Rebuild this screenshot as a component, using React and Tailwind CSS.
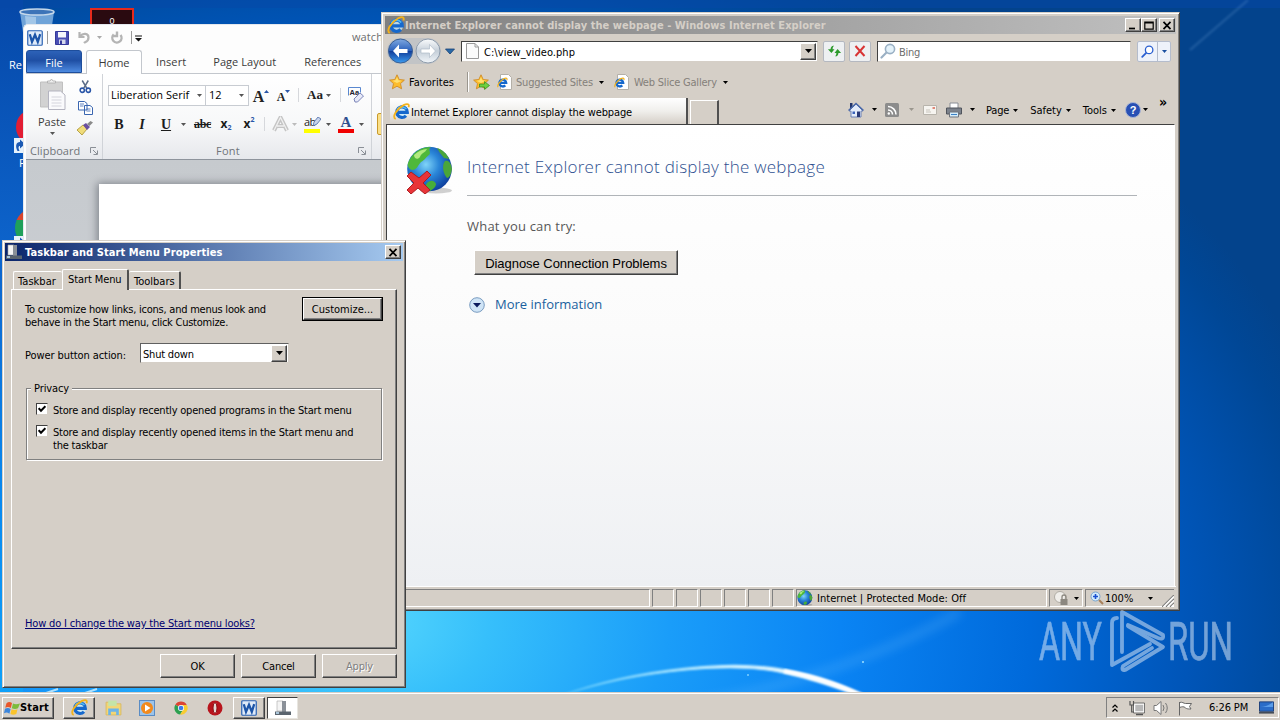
const ui = "font-['DejaVu_Sans_Condensed','DejaVu_Sans',sans-serif] text-[11px] leading-[13px] text-black";
const segoe = "font-['Open_Sans','Noto_Sans',sans-serif]";
const raised =
  'bg-[#d5cfc7] border border-t-white border-l-white border-r-[#404040] border-b-[#404040] shadow-[inset_-1px_-1px_0_#808080]';
const sunken = 'border border-t-[#808080] border-l-[#808080] border-r-white border-b-white';
const windowFrame =
  'border border-[#d5cfc7] border-r-[#404040] border-b-[#404040] shadow-[inset_1px_1px_0_#ffffff,inset_-1px_-1px_0_#808080] bg-[#d5cfc7]';

function Arrow({ className = '', color = '#000' }) {
  return (
    <svg viewBox="0 0 7 4" className={`w-[5px] h-[3px] shrink-0 ${className}`}>
      <path d="M0 0h7L3.5 4z" fill={color} />
    </svg>
  );
}

function IeLogo({ className = 'size-4' }) {
  return (
    <svg viewBox="0 0 16 16" className={`shrink-0 ${className}`} fill="none">
      <circle cx="8.400" cy="8.500" r="6" fill="#c8ecfc" opacity=".8" />
      <path d="M3.800 8.800h9.700A5 5 0 1 0 12.200 12" stroke="#1668cc" strokeWidth="3" />
      <path d="M4 6.400A5 5 0 0 1 12.600 5.800" stroke="#4fb8f4" strokeWidth="1.500" />
      <path d="M2.600 15C-1.500 13.600 3.600 5.400 10 2c3.800-1.900 5.600-.9 4.600 2" stroke="#f2b21c" strokeWidth="1.700" />
    </svg>
  );
}

function IePage() {
  return (
    <svg viewBox="0 0 16 16" className="size-4 shrink-0" fill="none">
      <path d="M3.500.5h8l3 3v12h-11z" fill="#fff" stroke="#b4b0a8" />
      <path d="M2.600 8.800h6.600a3.400 3.400 0 1 0-.9 2.600" stroke="#1668cc" strokeWidth="2.300" />
      <path d="M1.200 13C-.4 12 3 6.500 7 4.600c2.400-1 3.300-.3 2.900 1.400" stroke="#f2b21c" strokeWidth="1.200" />
    </svg>
  );
}

function Star({ add }) {
  return (
    <svg viewBox="0 0 17 16" className="w-[17px] h-4 shrink-0">
      <path
        d="M8 .8l2.200 4.700 5.200.6-3.900 3.500 1.100 5.200L8 12.200l-4.600 2.600 1.100-5.200L.6 6.100l5.200-.6z"
        fill="#fcbc2c"
        stroke="#d08c28"
        strokeWidth=".9"
      />
      <path d="M8 3l1.400 3.200 3.400.5L8 9 3.500 6.700l3-.5z" fill="#ffe070" />
      {add && <path d="M6.500 10h5V7.600l5 3.900-5 3.900V13h-5z" fill="#6fd040" stroke="#2d8a1c" strokeWidth=".7" />}
    </svg>
  );
}

function Globe({ className, error }) {
  return (
    <svg viewBox="0 0 48 48" className={`shrink-0 ${className}`}>
      <defs>
        <radialGradient id="sea" cx=".42" cy=".4" r=".65">
          <stop offset="0" stopColor="#7fd4f8" />
          <stop offset=".45" stopColor="#2a86d8" />
          <stop offset="1" stopColor="#0c3a9a" />
        </radialGradient>
      </defs>
      <ellipse cx="30" cy="44.500" rx="16" ry="3" fill="#000" opacity=".18" />
      <circle cx="23.500" cy="23" r="22.300" fill="url(#sea)" />
      <path d="M2 17C6 7 14 1 25 1c-4 3 1 5-2 8-3 2-4 5-8 7-3 3-4 8-9 8-3-1-5-4-4-7z" fill="#4fb83a" />
      <path d="M8 9c4-4 9-6 13-6-2 4-6 4-7 8-2 3-6 2-6-2z" fill="#b2ea80" />
      <path d="M31 2c6 2 10 6 12 11l-5-1-4-5zM39 15c3-1 6 1 7 8-1 6-3 9-5 9-3-3-6-12-2-17z" fill="#4aa63a" />
      <path d="M21 37c4-4 8-2 9 1 0 3-3 5-6 7-4-1-6-4-3-8z" fill="#48ae3a" />
      {error && (
        <path
          d="M1 30l4-4 8 6 8-7 4 4-8 8 7 7-5 4-7-6-7 6-4-4 7-7z"
          fill="#e83438"
          stroke="#b01c20"
          strokeWidth="1"
        />
      )}
    </svg>
  );
}

function WordLogo({ className = 'size-4' }) {
  return (
    <svg viewBox="0 0 16 16" className={`shrink-0 ${className}`} fill="none">
      <rect x=".75" y=".75" width="14.500" height="14.500" rx="1" fill="#dfeaf8" stroke="#2a62b4" strokeWidth="1.200" />
      <path d="M2.800 4.200l2.200 7.600 3-7 2.800 7 2.400-7.600" stroke="#1d55a8" strokeWidth="2.300" />
    </svg>
  );
}

function Lens({ className, color, rim = '#fff' }) {
  return (
    <svg viewBox="0 0 16 16" className={`size-4 shrink-0 ${className || ''}`} fill="none">
      <path d="M1.500 14.500L7 9" stroke={color} strokeWidth="2.200" strokeLinecap="round" />
      <circle cx="10" cy="6" r="4.600" fill={rim} stroke={color} strokeWidth="1.600" />
    </svg>
  );
}

function Wallpaper() {
  return (
    <svg className="absolute inset-0 w-[1280px] h-[720px]" viewBox="0 0 1280 720">
      <defs>
        <radialGradient id="sky" gradientUnits="userSpaceOnUse" cx="0" cy="0" r="1" gradientTransform="translate(370 620) scale(1000 720)">
          <stop offset="0" stopColor="#55d6fd" />
          <stop offset=".12" stopColor="#36bffb" />
          <stop offset=".3" stopColor="#1a9df9" />
          <stop offset=".47" stopColor="#0a84f4" />
          <stop offset=".66" stopColor="#006adb" />
          <stop offset=".82" stopColor="#0055b8" />
          <stop offset=".95" stopColor="#004796" />
          <stop offset="1" stopColor="#03438c" />
        </radialGradient>
        <linearGradient id="arc" x1="0" x2="1" y1="0" y2="0">
          <stop offset="0" stopColor="#7fdcff" stopOpacity=".5" />
          <stop offset=".5" stopColor="#c8f0ff" />
          <stop offset="1" stopColor="#fff" />
        </linearGradient>
        <linearGradient id="leftEdge" x1="0" x2="0" y1="0" y2="1">
          <stop offset="0" stopColor="#0648a8" />
          <stop offset=".35" stopColor="#0d64cc" />
          <stop offset=".7" stopColor="#0a8af0" />
          <stop offset="1" stopColor="#10a4fa" />
        </linearGradient>
        <filter id="soft"><feGaussianBlur stdDeviation="5" /></filter>
        <filter id="glow"><feGaussianBlur stdDeviation=".8" /></filter>
      </defs>
      <rect width="1280" height="720" fill="url(#sky)" />
      <rect width="23" height="720" fill="url(#leftEdge)" />
      <rect width="1280" height="8" fill="#0648a8" opacity=".5" />
      <path d="M680 706Q840 680 960 612" stroke="#7cc8ff" strokeWidth="9" opacity=".2" fill="none" filter="url(#soft)" />
      <path d="M1190 50L1248 0" stroke="#8ab8e8" strokeWidth="2.500" opacity=".18" filter="url(#glow)" />
      <path d="M560 696C640 667 740 659 790 671C825 678 852 690 874 700C845 692 820 681 788 674C740 661 640 669 560 696z" fill="url(#arc)" stroke="url(#arc)" strokeWidth="1.200" filter="url(#glow)" />
      <path d="M784 671C820 677 845 687 872 700" stroke="#fff" strokeWidth="4" fill="none" filter="url(#glow)" />
      <path d="M40 695l18-6M85 693l12-4" stroke="#d6f4ff" strokeWidth="2" opacity=".8" />
      <circle cx="863" cy="662" r="1" fill="#9fe0ff" />
      <circle cx="748" cy="675" r="1" fill="#7fd0ff" />
    </svg>
  );
}

function Shortcut() {
  return (
    <svg viewBox="0 0 14 15" className="w-[14px] h-[15px]">
      <rect width="14" height="15" fill="#e6f2fc" />
      <path d="M3.500 13C1 8 2 4 6 4V1.500L11 6 6 10.500V8C4.500 8 4 9.500 5.500 13z" fill="#1c5ab4" />
    </svg>
  );
}

function DesktopIcons() {
  return (
    <div>
      <svg viewBox="0 0 36 40" className="absolute left-[19px] top-[8px] w-9 h-10">
        <path d="M1 4l5 34h24l5-34z" fill="#6fa3d8" />
        <path d="M6 8l3 30h8V9z" fill="#b8d4ee" opacity=".7" />
        <ellipse cx="18" cy="4" rx="17" ry="3" fill="#3d74b8" stroke="#c5d8ea" strokeWidth="1.500" />
      </svg>
      <div className="absolute left-[90px] top-[8px] w-11 h-10 bg-[#2a0a10] border-2 border-[#e62a1c] pt-[6px] text-center text-white font-['Liberation_Sans',sans-serif] text-[9px] leading-[10px]">
        0
      </div>
      <span className={`absolute left-[9px] top-[58px] text-white text-[11px] leading-[14px] ${segoe}`}>Re</span>
      <div className="absolute left-[16px] top-[109px] size-9 rounded-full bg-[#e21e34]" />
      <div className="absolute left-[14px] top-[138px]"><Shortcut /></div>
      <span className={`absolute left-[19px] top-[156px] text-white text-[11px] leading-[14px] ${segoe}`}>F</span>
      <div className="absolute left-[15px] top-[208px] size-10 rounded-full bg-[linear-gradient(to_bottom,#d8452c_0_30%,#1fa05a_30%)]" />
      <div className="absolute left-[14px] top-[236px]"><Shortcut /></div>
    </div>
  );
}

const serif = "font-['Liberation_Serif',serif]";
const cell = 'flex items-center justify-center shrink-0';

function Launcher() {
  return (
    <svg viewBox="0 0 8 8" className="size-2 shrink-0" fill="none" stroke="#8a8f96">
      <path d="M.5 6V.5H6M3 3l4 4M7.500 3.500v4h-4" />
    </svg>
  );
}

function WordWindow() {
  return (
    <div
      className={`absolute left-[23px] top-[24px] w-[420px] h-[400px] rounded-tl-[5px] bg-[#fdfdfd] border-l border-t border-[#e4e8ee] pl-[2px] overflow-hidden text-[11px] text-[#3b3b3b] ${segoe}`}
    >
      <div className="flex items-center h-[25px] pl-[1px]">
        <WordLogo />
        <span className="w-px h-[13px] bg-[#9a9a9a] ml-[4px]" />
        <svg viewBox="0 0 14 14" className="size-[14px] ml-[7px]">
          <path d="M.5.5h13v13h-13z" fill="#4a4fb4" stroke="#34389a" />
          <path d="M3 1h8v5.500H3z" fill="#f4f6fc" />
          <path d="M4 8.500h6.500V13H4z" fill="#d4d8ec" />
          <path d="M5 9.500h2V13H5z" fill="#34389a" />
        </svg>
        <svg viewBox="0 0 12 13" className="w-3 h-[13px] ml-[9px]" fill="none" stroke="#b4b4b4" strokeWidth="2.200">
          <path d="M1.500 1v5h5M2 5.500C5 1.500 10.500 2 10.500 6.500S7 11 6 12" />
        </svg>
        <Arrow className="ml-[7px]" color="#aaa" />
        <svg viewBox="0 0 12 13" className="w-3 h-[13px] ml-[9px]" fill="none" stroke="#b4b4b4" strokeWidth="2.400">
          <path d="M2.800 3.500A4.600 4.600 0 1 0 9.500 4M6 .5v4.500H1" />
        </svg>
        <span className="w-px h-[13px] bg-[#9a9a9a] ml-[8px]" />
        <svg viewBox="0 0 8 7" className="w-[7px] h-[7px] ml-[3px] mt-px"><path d="M0 0h8v1.300H0zM0 3h8L4 7z" fill="#111" /></svg>
        <span className="ml-[210px] tracking-[0.1px] text-[#6e6e6e]">watch</span>
      </div>

      <div className="flex h-[24px] items-stretch border-b border-[#c3c7cd] leading-[24px]">
        <div className="w-[56px] rounded-t-[3px] border border-[#1e4e9c] bg-[linear-gradient(#2d62b8,#1f4fa4_45%,#4d8ae0)] text-white text-center leading-[23px]">File</div>
        <div className="w-[56px] ml-1 -mb-px rounded-t-[3px] border border-b-0 border-[#c3c7cd] bg-white text-center leading-[23px]">Home</div>
        <span className="ml-[14px] tracking-[0.1px]">Insert</span>
        <span className="ml-[27px] tracking-[0.05px]">Page Layout</span>
        <span className="ml-[28px]">References</span>
      </div>

      <div className="flex h-[86px] bg-[linear-gradient(#ffffff,#f7f8f9_60%,#e6e8ec)] border-b border-[#8e949c]">
        <div className="w-[77px] border-r border-[#d0d3d8] flex flex-col">
          <div className="flex h-[69px]">
            <div className="w-[52px] flex flex-col items-center pt-[5px]">
              <svg viewBox="0 0 26 31" className="w-[27px] h-[31px]">
                <path d="M1 3h22v25H1z" fill="#d2d2d2" stroke="#c0c0c0" />
                <path d="M8 4V2h2.500l1.500-2 1.500 2H16v2z" fill="#eee" stroke="#aaa" strokeWidth=".8" />
                <path d="M9 12h12l4.500 4v14.500H9z" fill="#fafafc" stroke="#b4b4c0" />
                <path d="M12 18h10M12 21h10M12 24h10M12 27h10" stroke="#d4d4dc" />
              </svg>
              <span className="leading-[14px] mt-[5px]">Paste</span>
              <Arrow className="mt-[3px]" color="#555" />
            </div>
            <div className="flex flex-col items-center gap-[6px] pt-[5px] w-[14px]">
              <svg viewBox="0 0 14 16" className="w-[13px] h-4" fill="none">
                <path d="M3.500 1l5 8.500M10 1L5 9.500" stroke="#5a6c88" strokeWidth="1.600" />
                <circle cx="3.500" cy="11.500" r="2.300" stroke="#2a56a8" strokeWidth="1.700" />
                <circle cx="10" cy="11.500" r="2.300" stroke="#2a56a8" strokeWidth="1.700" />
              </svg>
              <svg viewBox="0 0 15 14" className="w-[15px] h-[14px]" fill="#fff" stroke="#3a66b0">
                <path d="M.5.500h6l2.500 2V9H.5zM6.500 4.500h5.500l2.500 2v7h-8z" />
                <path d="M2 3h4M2 5h3.500M8.500 8h4M8.500 10h4" strokeWidth=".8" />
              </svg>
              <svg viewBox="0 0 16 14" className="w-4 h-[14px]">
                <path d="M0 9l6-5 4 4-5 6z" fill="#f0dc7a" stroke="#a8902a" strokeWidth=".8" />
                <path d="M6 4l3-2 4 4-3 3z" fill="#6a4fa0" />
                <path d="M10 3l3.500-3L16 1.500 12.500 5z" fill="#8a8a8a" />
              </svg>
            </div>
          </div>
          <div className="flex items-center justify-between pl-[4px] pr-[4px] text-[#707479] leading-[16px]">
            <span className="tracking-[0.05px]">Clipboard</span>
            <Launcher />
          </div>
        </div>

        <div className="w-[269px] border-r border-[#d0d3d8] pl-[5px]">
          <div className="flex items-center h-[31px] pt-[7px] text-[#222]">
            <div className="mt-1 flex items-center w-[98px] h-[21px] shrink-0 border border-[#c8ccd2] bg-white pl-[2px] text-black">
              <span className="w-[86px]">Liberation Serif</span>
              <Arrow color="#555" />
            </div>
            <div className="mt-1 flex items-center w-[43px] h-[21px] shrink-0 border border-l-0 border-[#c8ccd2] bg-white pl-[3px] text-black">
              <span className="w-[30px]">12</span>
              <Arrow color="#555" />
            </div>
            <span className={`${cell} w-[24px] mt-[7px] text-[16px] font-bold ${serif}`}>A<Arrow className="rotate-180 mb-2.5" color="#2a56a8" /></span>
            <span className={`${cell} w-[21px] mt-[7px] text-[12px] font-bold ${serif}`}>A<Arrow className="mb-2.5" color="#2a56a8" /></span>
            <span className={`${cell} w-[9px] mt-1`}><i className="w-px h-[14px] bg-[#d6d8dc]" /></span>
            <span className={`${cell} w-[32px] mt-1 text-[13px] font-bold gap-[3px] ${serif}`}>Aa<Arrow color="#555" /></span>
            <span className={`${cell} w-[10px] mt-1`}><i className="w-px h-[14px] bg-[#d6d8dc]" /></span>
            <svg viewBox="0 0 16 16" className="size-4 ml-[3px] mt-1 shrink-0">
              <path d="M.5 8.500v-8h12v5" fill="none" stroke="#5a88d0" />
              <text x="1.500" y="7.500" fontSize="7.500" fontWeight="700" fontFamily="Liberation Sans" fill="#223">Aa</text>
              <path d="M6 12l6-6 3.500 3-6 6H7z" fill="#e8eaf8" stroke="#7a84b8" />
            </svg>
          </div>
          <div className="flex items-center h-[28px] mt-[5px] text-[#1c1c1c]">
            <span className={`${cell} w-[22px] text-[14px] font-bold ${serif}`}>B</span>
            <span className={`${cell} w-[24px] text-[14px] font-bold italic ${serif}`}>I</span>
            <span className={`${cell} w-[24px] text-[14px] font-bold underline ${serif}`}>U</span>
            <span className={`${cell} w-[11px]`}><Arrow color="#555" /></span>
            <span className={`${cell} w-[27px] text-[12px] font-bold line-through tracking-[-0.3px] ${serif}`}>abc</span>
            <span className={`${cell} w-[20px] text-[12px] font-bold`}>x<small className="text-[7px] mt-2 text-[#2a56a8]">2</small></span>
            <span className={`${cell} w-[26px] text-[12px] font-bold`}>x<small className="text-[7px] mb-2 text-[#2a56a8]">2</small></span>
            <span className={`${cell} w-[4px]`}><i className="w-px h-[14px] bg-[#d6d8dc]" /></span>
            <svg viewBox="0 0 18 16" className="w-[18px] h-4 ml-[6px] shrink-0" fill="none">
              <path d="M2 14.500L8.500 1.500 15 14.500M5 10h7" stroke="#c4c4c4" strokeWidth="4" />
              <path d="M2 14.500L8.500 1.500 15 14.500M5 10h7" stroke="#f0f0f0" strokeWidth="1.300" />
            </svg>
            <Arrow className="mx-[2px]" color="#bbb" />
            <span className="w-[16px] ml-[5px] h-[17px] border-b-4 border-[#ffff00] text-[11px] leading-[11px] shrink-0 relative">
              <span className="tracking-[-0.6px]">ab</span>
              <svg viewBox="0 0 8 9" className="absolute left-[9px] top-[1px] w-2 h-[9px]"><path d="M0 9l1-4 4-5 3 2-4 5z" fill="#c8d4ec" stroke="#4a6aa8" strokeWidth=".8" /></svg>
            </span>
            <Arrow className="ml-[6px]" color="#555" />
            <span className={`ml-[7px] w-[16px] h-[17px] border-b-4 border-[#f00000] text-center text-[15px] leading-[13px] font-bold text-[#2f4f8f] shrink-0 ${serif}`}>A</span>
            <Arrow className="ml-[5px]" color="#555" />
          </div>
          <div className="flex items-center mt-[5px] pr-[5px] text-[#707479] leading-[16px]">
            <span className="ml-[108px] mr-auto tracking-[0.2px]">Font</span>
            <Launcher />
          </div>
        </div>
        <div className="ml-[5px] mt-[39px] w-8 h-[22px] rounded-[2px] border border-[#c89a2c] bg-[#fbe089]" />
      </div>

      <div className="h-[240px] bg-[linear-gradient(#c6cace,#cdd0d5)] pt-[24px] pl-[73px]">
        <div className="h-[240px] bg-white shadow-[-2px_-1px_8px_#80858c]" />
      </div>
    </div>
  );
}

function CaptionButton({ children, className = '' }) {
  return (
    <button className={`flex items-center justify-center w-4 h-[14px] ${raised} ${className}`}>
      <svg viewBox="0 0 10 9" className="w-[10px] h-[9px]" fill="none" stroke="#000" strokeWidth="1.700">{children}</svg>
    </button>
  );
}

function Command({ label, className }) {
  return (
    <span className={`flex items-center pt-[2px] ${className}`}>
      {label}
      <Arrow className="ml-[4px]" />
    </span>
  );
}

function StatusCell({ className = '', children }) {
  return <div className={`h-[18px] shrink-0 flex items-center ${sunken} ${className}`}>{children}</div>;
}

function BrowserWindow() {
  return (
    <div className={`absolute left-[381px] top-[12px] w-[799px] h-[599px] p-[3px] flex flex-col ${windowFrame} ${ui}`}>
      <div className="h-[18px] shrink-0 flex items-center bg-[linear-gradient(90deg,#808080,#c0c0c0)] pr-px pl-[2px]">
        <IeLogo className="size-[18px]" />
        <span className="mr-auto pt-px font-bold text-[#d5cfc7] tracking-[0.05px] whitespace-nowrap">
          Internet Explorer cannot display the webpage - Windows Internet Explorer
        </span>
        <CaptionButton><path d="M1 7.500h6" /></CaptionButton>
        <CaptionButton><path d="M.8 1.200h8.400v7H.8zM1 2h8" strokeWidth="1.200" /></CaptionButton>
        <CaptionButton className="ml-[2px]"><path d="M1.500.8l7 7.400M8.500.8l-7 7.400" /></CaptionButton>
      </div>

      <div className="h-[34px] shrink-0 flex items-center pl-[2px]">
        <svg viewBox="0 0 70 28" className="w-[70px] h-7 shrink-0">
          <defs>
            <linearGradient id="back" x1="0" x2="0" y1="0" y2="1">
              <stop offset="0" stopColor="#7fa8e0" />
              <stop offset=".48" stopColor="#2c62bc" />
              <stop offset=".52" stopColor="#123f9c" />
              <stop offset="1" stopColor="#3c9cf0" />
            </linearGradient>
            <linearGradient id="fwd" x1="0" x2="0" y1="0" y2="1">
              <stop offset="0" stopColor="#fafcfd" />
              <stop offset=".5" stopColor="#c4ced8" />
              <stop offset="1" stopColor="#f2f6fa" />
            </linearGradient>
          </defs>
          <path d="M13 1h28a13 13 0 0 1 0 26H13A13 13 0 0 1 13 1z" fill="#c2c4c6" />
          <circle cx="13.500" cy="14" r="12" fill="url(#back)" stroke="#3a5f94" />
          <circle cx="41" cy="14" r="12" fill="url(#fwd)" stroke="#8e9cac" />
          <path d="M6 14l6-6.500v4.500h8.500v4H12v4.500z" fill="#fff" />
          <path d="M48.500 14l-6-6.500v4.500H34v4h8.500v4.500z" fill="#fff" stroke="#b0bcc8" strokeWidth=".7" />
          <path d="M58.500 12h9l-4.500 5z" fill="#2a6aa8" stroke="#173f74" strokeWidth=".8" />
        </svg>
        <div className="ml-[4px] w-[357px] h-[21px] shrink-0 flex items-center bg-white border border-t-[#404040] border-l-[#404040] border-r-[#d5cfc7] border-b-[#d5cfc7] pl-[4px] pr-px">
          <svg viewBox="0 0 13 16" className="w-[13px] h-4"><path d="M.5.5h8.500l3.500 3.500v11.500H.5z" fill="#fbfbfb" stroke="#9a9a9a" /><path d="M9 .5V4h3.500" fill="none" stroke="#9a9a9a" /></svg>
          <span className="ml-[5px] mr-auto pt-[2px] tracking-[0.05px]">C:\view_video.php</span>
          <span className={`w-4 h-[17px] flex items-center justify-center ${raised}`}><Arrow className="!w-[7px] !h-1" /></span>
        </div>
        <div className="ml-[5px] w-[22px] h-[21px] shrink-0 flex items-center justify-center rounded-[2px] border border-[#b4b8c0] bg-[#eef0f2]">
          <svg viewBox="0 0 16 14" className="w-[15px] h-[14px]" fill="#2c9a2c">
            <path d="M7.500 1.500C5.500 1 4 2.500 3.800 5H1l3.700 4.200L8 5H6C6 3.500 6.500 2.300 7.500 1.500z" />
            <path d="M8.500 12.500c2 .5 3.500-1 3.700-3.500H15l-3.700-4.200L8 9h2c0 1.500-.5 2.700-1.500 3.500z" />
          </svg>
        </div>
        <div className="ml-[4px] w-[22px] h-[21px] shrink-0 flex items-center justify-center rounded-[2px] border border-[#b4b8c0] bg-[#eef0f2]">
          <svg viewBox="0 0 12 12" className="w-3 h-3"><path d="M1.500 1l9 10M10.500 1l-9 10" stroke="#d83434" strokeWidth="2" /></svg>
        </div>
        <div className="ml-[6px] w-[254px] h-[21px] shrink-0 flex items-center bg-white border border-t-[#404040] border-l-[#404040] border-r-[#d5cfc7] border-b-[#d5cfc7] pl-[2px] text-[#6e6e6e]">
          <Lens color="#9ab0c4" rim="#e4f2fa" />
          <span className="ml-[3px] pt-[2px] tracking-[-0.3px]">Bing</span>
        </div>
        <div className="ml-[6px] w-[34px] h-[21px] shrink-0 flex items-center rounded-[2px] border border-[#b4bccc] bg-[#eef2fa]">
          <span className="w-[20px] h-full flex items-center justify-center border-r border-[#b4bccc]"><Lens color="#2a5fd0" className="!size-[13px]" /></span>
          <Arrow className="ml-[4px]" color="#1a4fa0" />
        </div>
      </div>

      <div className="h-[28px] shrink-0 flex items-center pl-[4px]">
        <Star />
        <span className="ml-[3px] tracking-[0.04px]">Favorites</span>
        <span className="ml-[13px] w-[2px] h-5 border-l border-[#9a968e] bg-white" />
        <span className="ml-[4px]"><Star add /></span>
        <span className="ml-[7px]"><IePage /></span>
        <span className="ml-[3px] mt-px text-[#84807a] tracking-[-0.2px]">Suggested Sites</span>
        <Arrow className="ml-[6px]" />
        <span className="ml-[10px]"><IePage /></span>
        <span className="ml-[4px] mt-px text-[#84807a] tracking-[-0.2px]">Web Slice Gallery</span>
        <Arrow className="ml-[6px]" />
      </div>

      <div className="h-[28px] shrink-0 flex pl-[5px] items-end">
        <div className="w-[298px] h-[26px] flex items-center bg-[linear-gradient(#ffffff,#f0efec_50%,#d5cfc7)] border-r-2 border-[#505050] pl-[3px] tracking-[-0.13px]">
          <IeLogo className="size-[17px]" />
          <span className="ml-px pt-[2px]">Internet Explorer cannot display the webpage</span>
        </div>
        <div className="ml-[2px] w-[29px] h-[24px] border-t border-l border-t-white border-l-white border-r-2 border-r-[#505050]" />
        <div className="ml-[129px] flex items-center h-[26px] mb-[2px]">
          <svg viewBox="0 0 16 16" className="size-4 mt-px">
            <path d="M2 1h2.500v5H2z" fill="#22346a" />
            <path d="M8 2L1 9h2v6h10V9h2z" fill="#e4ecfa" stroke="#6a80b4" />
            <path d="M.5 8.500L8 1.500l7.500 7" fill="none" stroke="#4a68a8" strokeWidth="1.500" />
            <path d="M9 9.500h3V15H9z" fill="#2a3a78" /><path d="M4.500 9.500h2.500v2.500H4.500z" fill="#3a62b8" />
          </svg>
          <Arrow className="ml-[8px] mt-px" />
          <svg viewBox="0 0 14 14" className="size-[14px] ml-[8px] mt-px">
            <rect width="14" height="14" rx="1.500" fill="#8c8c8c" />
            <g fill="none" stroke="#fff" strokeWidth="1.600"><path d="M3 7a4.500 4.500 0 0 1 4.500 4.500M3 3.500a8 8 0 0 1 8 8" /></g>
            <circle cx="3.800" cy="10.500" r="1.200" fill="#fff" />
          </svg>
          <Arrow className="ml-[10px] mt-px" color="#9a968e" />
          <svg viewBox="0 0 14 10" className="w-[14px] h-[10px] ml-[9px] mt-px"><path d="M.5.5h13v9H.5z" fill="#f6f4f0" stroke="#b8b4ac" /><path d="M9.500 2h2.500v2H9.500z" fill="#e08878" /><path d="M3 5h4M3 7h5" stroke="#c8c4bc" /></svg>
          <svg viewBox="0 0 16 16" className="size-4 ml-[9px] mt-px">
            <path d="M4 1h8v6H4z" fill="#fff" stroke="#8a8e96" /><path d="M.5 6h15v6H.5z" fill="#7c828c" stroke="#50545c" /><path d="M3.500 10h9v5h-9z" fill="#d4ecfa" stroke="#70747c" /><path d="M5 12.500h6" stroke="#3c82c8" />
          </svg>
          <Arrow className="ml-[8px] mt-px" />
          <Command label="Page" className="ml-[11px] tracking-[-0.2px]" />
          <Command label="Safety" className="ml-[12px]" />
          <Command label="Tools" className="ml-[12px]" />
          <svg viewBox="0 0 16 16" className="size-4 ml-[9px] mt-px">
            <circle cx="8" cy="8" r="7.500" fill="#2850b4" stroke="#a8b4d4" />
            <text x="8" y="12" textAnchor="middle" fontSize="11" fontWeight="700" fontFamily="Liberation Sans" fill="#fff">?</text>
          </svg>
          <Arrow className="ml-[2px] mt-px" />
          <span className="ml-[11px] mb-[13px] font-bold text-[14px]">»</span>
        </div>
      </div>

      <div className="flex-1 flex flex-col ml-px mr-px border-t border-l border-[#404040] border-r border-r-white bg-[linear-gradient(#ffffff,#fbfbfb_45%,#eef0f3)] pl-[19px] pt-[21px] font-['Open_Sans','Noto_Sans',sans-serif]">
        <div className="flex">
          <Globe className="size-12" error />
          <div className="ml-[13px] w-[670px] h-[50px] border-b border-[#b0b4b8] pt-[10px] text-[17px] leading-[22px] tracking-[0.25px] font-light text-[#2f5090]">
            Internet Explorer cannot display the webpage
          </div>
        </div>
        <p className="ml-[61px] mt-[21px] text-[13px] leading-[18px] tracking-[0.2px] text-[#575757]">What you can try:</p>
        <button className={`ml-[68px] mt-[15px] w-[204px] h-[25px] pt-px text-[13px] tracking-[-0.04px] font-['Liberation_Sans',sans-serif] ${raised}`}>
          Diagnose Connection Problems
        </button>
        <div className="ml-[63px] mt-[19px] flex items-center text-[13px] leading-[18px] text-[#1a5f9e]">
          <svg viewBox="0 0 16 16" className="size-4 mt-[3px]"><circle cx="8" cy="8" r="7.300" fill="#cfe4f6" stroke="#7a9cc0" /><path d="M4 6h8L8 10.500z" fill="#0a1a5c" /></svg>
          <a className="ml-[10px]">More information</a>
        </div>
      </div>
      <div className="h-[3px] shrink-0 border-t border-white" />

      <div className="h-[18px] shrink-0 flex items-center gap-[2px]">
        <StatusCell className="w-[265px]" />
        <StatusCell className="w-[22px]" />
        <StatusCell className="w-[22px]" />
        <StatusCell className="w-[22px]" />
        <StatusCell className="w-[22px]" />
        <StatusCell className="w-[22px]" />
        <StatusCell className="w-[22px]" />
        <StatusCell className="w-[251px]">
          <Globe className="size-4" />
          <span className="ml-[4px] pt-px tracking-[0.05px]">Internet | Protected Mode: Off</span>
        </StatusCell>
        <StatusCell className="w-[34px] pl-[4px]">
          <svg viewBox="0 0 15 15" className="size-[15px]"><circle cx="6" cy="6" r="5.500" fill="#f0eeea" stroke="#b0aca4" /><path d="M6.500 8h7v6h-7z" fill="#8c8880" /><path d="M8 8V6a2 2 0 0 1 4 0v2" fill="none" stroke="#8c8880" strokeWidth="1.300" /></svg>
          <Arrow className="ml-[5px]" />
        </StatusCell>
        <StatusCell className="w-[89px] pl-[4px] border-r-0">
          <svg viewBox="0 0 14 14" className="size-[14px]" fill="none">
            <path d="M9 9l4 4" stroke="#a8805a" strokeWidth="2" /><circle cx="5.500" cy="5.500" r="4.500" fill="#d4ecfc" stroke="#7aa4cc" /><path d="M5.500 3v5M3 5.500h5" stroke="#1a50d0" strokeWidth="1.600" />
          </svg>
          <span className="ml-[1px] pt-px">100%</span>
          <Arrow className="ml-[15px] mr-auto" />
          <svg viewBox="0 0 12 12" className="size-3 mt-[5px]" strokeWidth="1.300"><path d="M0 12L12 0M4 12l8-8M8 12l4-4" stroke="#808080" /><path d="M1.500 12L12 1.500M5.500 12L12 5.500M9.500 12L12 9.500" stroke="#fff" /></svg>
        </StatusCell>
      </div>
    </div>
  );
}

function PropertiesIcon({ className }) {
  return (
    <svg viewBox="0 0 16 16" className={`shrink-0 ${className}`}>
      <path d="M2 1h6v10H2z" fill="#f4f4f4" stroke="#a8a8a8" strokeWidth=".6" />
      <path d="M7 1h4v11H7z" fill="#8a9098" />
      <path d="M0 11.500h16v3.500H0z" fill="#5a646e" />
      <path d="M1 12h3v2H1z" fill="#a8c4d8" />
    </svg>
  );
}

function CheckRow({ children, className }) {
  return (
    <label className={`flex items-start ${className}`}>
      <span className="mr-[5px] size-3 shrink-0 bg-white border border-t-[#404040] border-l-[#404040] border-r-[#d5cfc7] border-b-[#d5cfc7] flex items-center justify-center">
        <svg viewBox="0 0 8 8" className="size-2" fill="none" stroke="#000" strokeWidth="2"><path d="M.7 3.200l2.300 2.600L7.400 1.200" /></svg>
      </span>
      <span className="mt-px">{children}</span>
    </label>
  );
}

function PropertiesDialog() {
  return (
    <div className={`absolute left-[2px] top-[240px] w-[404px] h-[448px] p-[2px] flex flex-col tracking-[-0.2px] ${windowFrame} ${ui}`}>
      <div className="h-[18px] shrink-0 flex items-center bg-[linear-gradient(90deg,#0a246a,#a6caf0)] pl-px pr-[2px]">
        <PropertiesIcon className="size-4" />
        <span className="ml-[3px] mr-auto font-bold text-white tracking-[0.08px]">Taskbar and Start Menu Properties</span>
        <CaptionButton><path d="M1.500.8l7 7.400M8.500.8l-7 7.400" /></CaptionButton>
      </div>

      <div className="mt-[8px] ml-[6px] flex items-end h-[20px] shrink-0">
        <div className="w-[49px] h-[18px] ml-[2px] pl-[4px] pt-[3px] border-t border-l border-white rounded-t-[2px] tracking-[0.05px]">Taskbar</div>
        <div className="w-[67px] h-[21px] -mb-px pl-[5px] pt-[3px] border-t border-l border-white border-r-2 border-r-[#505050] rounded-t-[2px] bg-[#d5cfc7] z-10 tracking-[-0.1px]">Start Menu</div>
        <div className="w-[52px] h-[18px] pl-[5px] pt-[3px] border-t border-white border-r-2 border-r-[#505050] rounded-t-[2px] tracking-[0px]">Toolbars</div>
      </div>

      <div className="mx-[6px] h-[360px] shrink-0 flex flex-col items-start border border-t-white border-l-white border-r-[#404040] border-b-[#404040] shadow-[inset_-1px_-1px_0_#808080] pl-[13px] pr-[13px]">
        <div className="w-full flex justify-between">
          <p className="pt-[13px] whitespace-nowrap">
            <span className="tracking-[-0.23px]">To customize how links, icons, and menus look and</span>
            <br />
            <span className="tracking-[-0.25px]">behave in the Start menu, click Customize.</span>
          </p>
          <button className="mt-[7px] w-[81px] h-[24px] border border-black p-0">
            <span className={`flex items-center justify-center w-full h-full tracking-[0px] ${raised}`}>Customize...</span>
          </button>
        </div>
        <div className="mt-[14px] flex items-center">
          <span className="w-[115px] mt-[5px] tracking-[-0.08px]">Power button action:</span>
          <div className="w-[149px] h-[20px] flex items-center justify-between bg-white border border-t-[#606060] border-l-[#606060] border-r-[#d5cfc7] border-b-[#d5cfc7] pl-[2px] pr-px">
            <span className="pt-[2px]">Shut down</span>
            <span className={`w-4 h-[17px] flex items-center justify-center ${raised}`}><Arrow className="!w-[7px] !h-1" /></span>
          </div>
        </div>
        <fieldset className="mt-[19px] ml-px w-[356px] h-[78px] border border-[#808080] shadow-[1px_1px_0_#ffffff,inset_1px_1px_0_#ffffff] pl-[9px]">
          <legend className="ml-[-5px] px-[3px] bg-[#d5cfc7] tracking-[-0.1px]">Privacy</legend>
          <CheckRow className="mt-[8px]">Store and display recently opened programs in the Start menu</CheckRow>
          <CheckRow className="mt-[8px]">
            Store and display recently opened items in the Start menu and
            <br />
            the taskbar
          </CheckRow>
        </fieldset>
        <a className="mt-[157px] text-[#00006e] underline tracking-[-0.17px]">How do I change the way the Start menu looks?</a>
      </div>

      <div className="mt-[5px] mr-[6px] flex justify-end gap-[6px]">
        <button className={`w-[75px] h-[24px] ${raised}`}>OK</button>
        <button className={`w-[75px] h-[24px] ${raised}`}>Cancel</button>
        <button className={`w-[75px] h-[24px] text-[#808080] [text-shadow:1px_1px_0_#fff] ${raised}`}>Apply</button>
      </div>
    </div>
  );
}

function Watermark() {
  return (
    <svg viewBox="0 0 210 70" className="absolute left-[1036px] top-[606px] w-[210px] h-[70px]" opacity=".5">
      <g fill="#e8f0fa" stroke="#e8f0fa" strokeWidth=".6" fontFamily="Roboto" fontSize="53" fontWeight="400">
        <text x="3" y="54" textLength="63" lengthAdjust="spacingAndGlyphs">ANY</text>
        <text x="132" y="54" textLength="65" lengthAdjust="spacingAndGlyphs">RUN</text>
      </g>
      <g fill="none" stroke="#e8f0fa" strokeWidth="3.800" strokeLinejoin="round" strokeLinecap="round">
        <path d="M81 12q-5 0-5 5v42l38-21" />
        <path d="M86 46V6l41 23q1 5-5 3L92 19" />
        <path d="M92 20l35 21-38 23q-4 1-2-4l29-18" />
      </g>
    </svg>
  );
}

function Taskbar() {
  return (
    <div className={`absolute left-0 top-[692px] w-[1280px] h-[28px] flex items-center bg-[#d5cfc7] border-t border-[#d5cfc7] shadow-[inset_0_1px_0_#ffffff] pt-[2px] ${ui}`}>
      <button className={`ml-[2px] w-[52px] h-[22px] flex items-center pl-px ${raised}`}>
        <svg viewBox="0 0 16 16" className="w-4 h-4 shrink-0">
          <path d="M2.500 3.200C4.500 1.600 6 1.800 8 3L6.800 8C5 6.800 3.300 6.800 1.200 7.800z" fill="#e8562a" />
          <path d="M9 3.500c2 1 3.800 1 7 0L14 8.200c-2 1-4 1-6.200 0z" fill="#7cbc3c" />
          <path d="M1 8.800c2-1 3.800-1 5.600.2L5.400 13.800C3.600 12.300 2 12.300 0 13.200z" fill="#3c86dc" />
          <path d="M7.600 9.300c2 1 3.800 1 5.900 0l-1.200 4.800c-2 1-4 1-5.900 0z" fill="#fac42c" />
        </svg>
        <span className="font-bold tracking-[0.15px]">Start</span>
      </button>
      <div className={`ml-[9px] w-[32px] h-[22px] flex items-center justify-center ${raised}`}><IeLogo className="size-[17px]" /></div>
      <div className="w-[34px] ml-[1px] flex justify-center">
        <svg viewBox="0 0 16 16" className="size-[17px]">
          <path d="M1 3h5l1 1.500h8V15H1z" fill="#f2d676" stroke="#d8b860" strokeWidth=".8" /><path d="M3 1.500h8v5H3z" fill="#c4e4a8" /><path d="M3 9h10v6h-2.500v-3h-5v3H3z" fill="#6cb4e8" />
        </svg>
      </div>
      <div className="w-[34px] flex justify-center">
        <svg viewBox="0 0 16 16" className="size-4">
          <rect x=".5" y=".5" width="15" height="15" fill="#9cc4ea" stroke="#5a8cc4" /><circle cx="8" cy="8" r="6" fill="#f28a1c" /><path d="M6 4.500L11.500 8 6 11.500z" fill="#fff" />
        </svg>
      </div>
      <div className="w-[34px] flex justify-center">
        <svg viewBox="0 0 16 16" className="size-[14px]">
          <path d="M8 8L1.500 4.200A7.500 7.500 0 0 1 14.500 4.200z" fill="#dc4434" /><path d="M8 8h-.1L1.500 4.200A7.500 7.500 0 0 0 7 15.500L11 9z" fill="#2ca050" /><path d="M8 4.500h6.700A7.500 7.500 0 0 1 7 15.500L11 9z" fill="#f8cc30" /><circle cx="8" cy="8" r="3.500" fill="#fff" /><circle cx="8" cy="8" r="2.700" fill="#3c7ce8" />
        </svg>
      </div>
      <div className="w-[34px] flex justify-center">
        <svg viewBox="0 0 16 16" className="size-4"><circle cx="8" cy="8" r="7.500" fill="#b8141c" /><ellipse cx="8" cy="8" rx="2" ry="5.300" fill="#e4d8d4" stroke="#8a0c12" /></svg>
      </div>
      <div className={`ml-px w-[32px] h-[22px] flex items-center justify-center ${raised}`}><WordLogo /></div>
      <div className="ml-[2px] w-[31px] h-[22px] flex items-center justify-center bg-white border border-t-[#404040] border-l-[#404040] border-r-[#e8e6e0] border-b-[#e8e6e0]"><PropertiesIcon className="size-4" /></div>

      <div className={`ml-auto mr-px w-[173px] h-[21px] flex items-center pl-[5px] ${sunken}`}>
        <svg viewBox="0 0 6 8" className="w-[6px] h-2" fill="none" stroke="#000" strokeWidth="1.200"><path d="M.5 3.500L3 1l2.500 2.500M.5 7.500L3 5l2.500 2.500" /></svg>
        <svg viewBox="0 0 16 16" className="size-4 ml-[11px]">
          <path d="M5.500 4h9.500v8H5.500z" fill="#b8b8b8" stroke="#fff" strokeWidth="1.500" /><path d="M4.500 3h11v10h-11z" fill="none" stroke="#555" strokeWidth=".8" /><path d="M7 14.500h7" stroke="#555" strokeWidth="1.500" /><path d="M1 1v4h3.500V1M2.700 5v7H5" fill="none" stroke="#555" strokeWidth="1.200" />
        </svg>
        <svg viewBox="0 0 17 16" className="w-[17px] h-4 ml-[8px]" fill="none" stroke="#777"><path d="M1 5.500h2.500L8 1.500v13L3.500 10.500H1z" fill="#fff" /><path d="M10 5q2 3 0 6M12.500 3q3.500 5 0 10" /></svg>
        <svg viewBox="0 0 16 16" className="size-4 ml-[7px]" fill="#fff" stroke="#666"><path d="M2.500 2v13.500M2.500 2.500c3-1 4 1 6 1h6l-2 3 1.500 2.500c-4 0-5-.5-6-1.500s-3-1-5.500 0z" /></svg>
        <span className="ml-[16px] tracking-[-0.1px]">6:26 PM</span>
        <svg viewBox="0 0 16 13" className="w-[15px] h-[13px] ml-[11px]"><path d="M.5.5h15v10H.5z" fill="#2a6cc8" stroke="#1a3c78" /><path d="M1 6C6 6 10 4 15 1v5z" fill="#5a9ce8" /><path d="M0 11h16v2H0z" fill="#444c58" /></svg>
      </div>
    </div>
  );
}

export default function App() {
  return (
    <div className="relative w-[1280px] h-[720px] overflow-hidden bg-[#0a84f4] select-none">
      <Wallpaper />
      <DesktopIcons />
      <WordWindow />
      <BrowserWindow />
      <PropertiesDialog />
      <Watermark />
      <Taskbar />
    </div>
  );
}
